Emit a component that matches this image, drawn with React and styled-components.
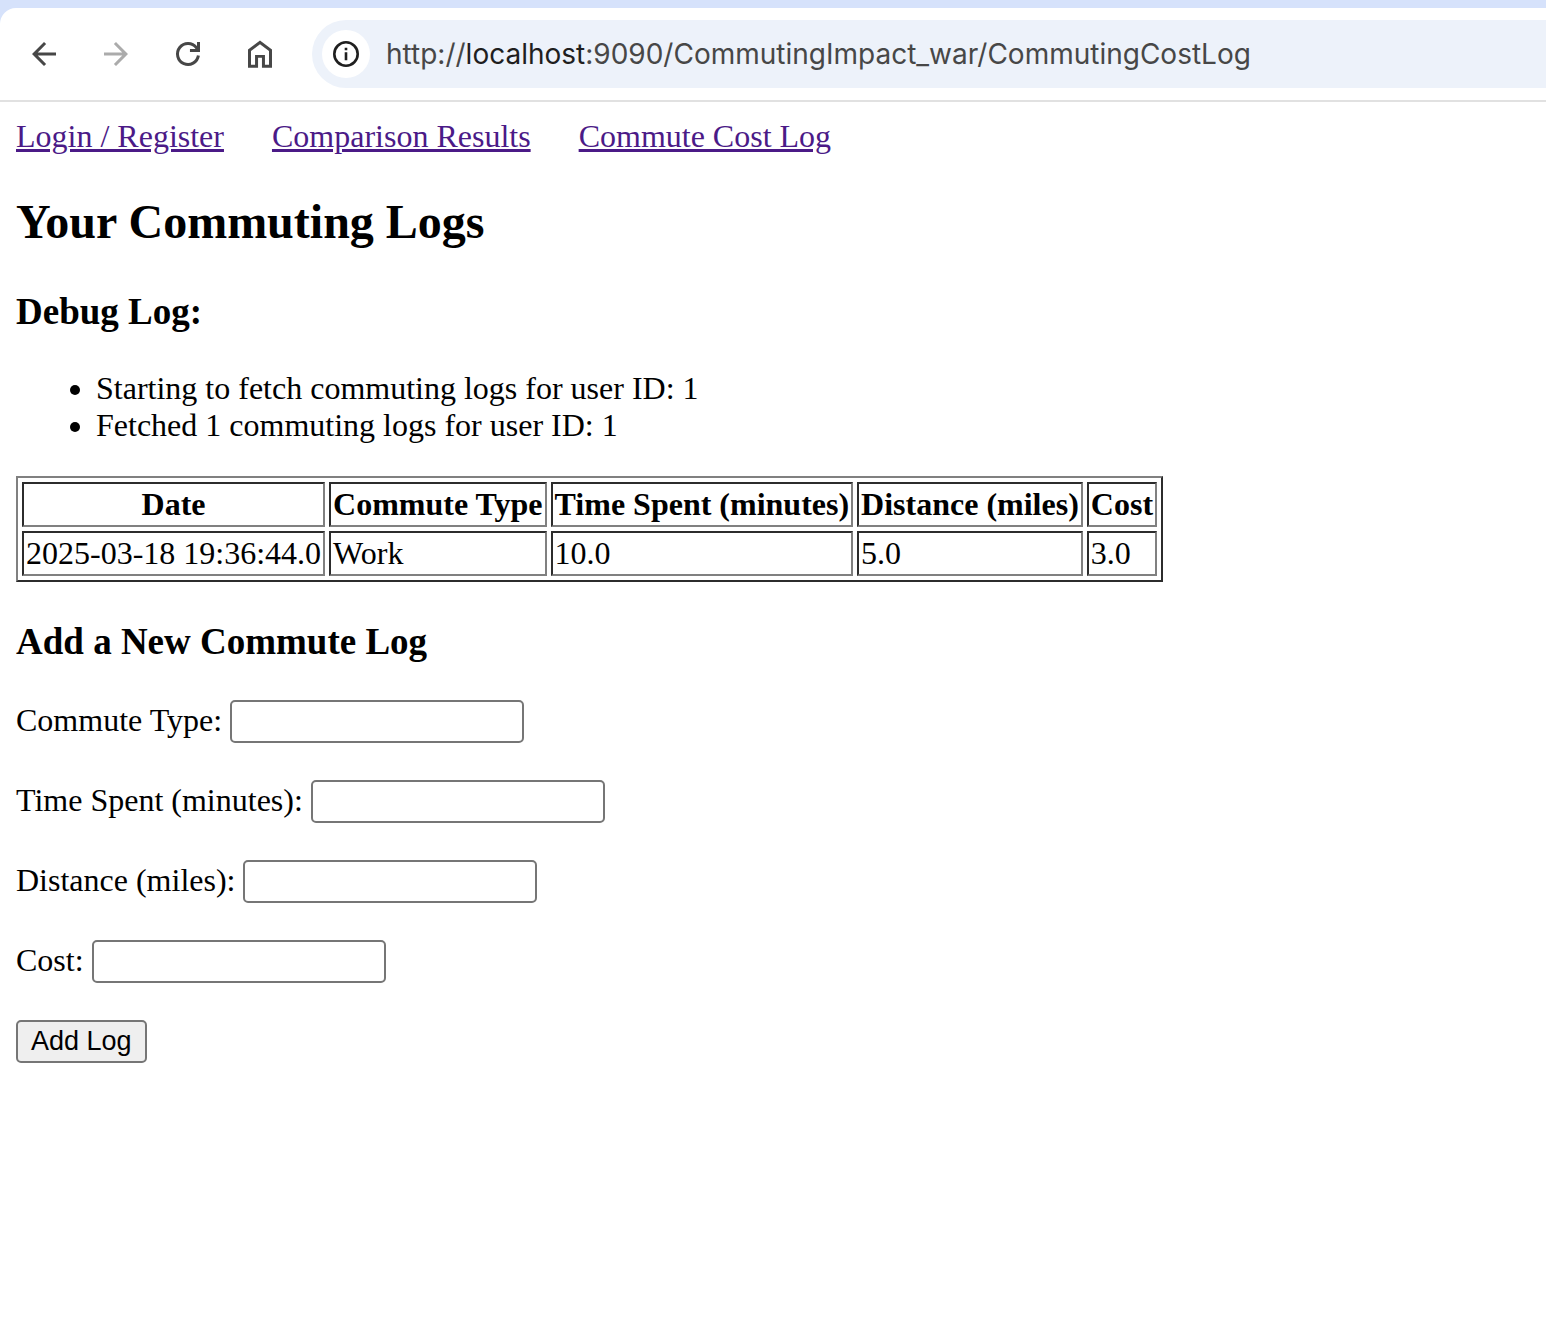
import React from "react";
import styled, { createGlobalStyle } from "styled-components";

const GlobalStyle = createGlobalStyle`
  body {
    margin: 0;
    background: #ffffff;
    color: #000000;
    font-family: "Liberation Serif", "Times New Roman", serif;
    font-size: 32px;
    line-height: 37px;
  }
`;

const TabStrip = styled.header`
  padding-top: 8px;
  background: #d6e2fb;
`;

const Toolbar = styled.div`
  display: flex;
  align-items: center;
  height: 92px;
  padding-left: 8px;
  background: #ffffff;
  border-bottom: 2px solid #e1e1e1;
  border-top-left-radius: 16px;
`;

const ToolButton = styled.button`
  display: flex;
  align-items: center;
  justify-content: center;
  width: 72px;
  height: 72px;
  padding: 0;
  border: 0;
  background: transparent;
  color: #474747;

  &:disabled {
    color: #ababab;
  }
`;

const Glyph = styled.svg`
  display: block;
  width: 36px;
  height: 36px;
  fill: currentColor;
`;

const AddressBar = styled.div`
  display: flex;
  flex: 1;
  align-items: center;
  gap: 16px;
  height: 68px;
  min-width: 0;
  margin-left: 16px;
  padding-left: 10px;
  border-radius: 34px 0 0 34px;
  background: #edf2fa;
`;

const SiteInfo = styled.button`
  display: flex;
  flex: none;
  align-items: center;
  justify-content: center;
  width: 48px;
  height: 48px;
  padding: 0;
  border: 0;
  border-radius: 50%;
  background: #ffffff;
  color: #1f1f1f;
`;

const Address = styled.div`
  flex: 1;
  overflow: hidden;
  color: #474747;
  font-family: Inter, Roboto, "Liberation Sans", sans-serif;
  font-size: 28px;
  line-height: 36px;
  white-space: nowrap;
  outline: 0;
`;

const Host = styled.span`
  color: #1f1f1f;
`;

const Page = styled.main`
  padding: 16px;
`;

const Nav = styled.nav`
  display: flex;
  flex-wrap: wrap;
  gap: 0 48px;
`;

const NavLink = styled.a`
  color: #4b1a87;
  text-decoration: underline;
`;

const Title = styled.h2`
  margin: 40px 0 41px;
  font-size: 48px;
  line-height: 54px;
`;

const Subtitle = styled.h3`
  margin: 38px 0 36px;
  font-size: 37px;
  line-height: 44px;
`;

const DebugList = styled.ul`
  margin: 32px 0;
  padding-left: 80px;
`;

const LogTable = styled.table`
  border: 2px solid;
  border-color: #808080 #2c2c2c #2c2c2c #808080;
  border-collapse: separate;
  border-spacing: 4px;

  th,
  td {
    padding: 2px;
    border: 2px solid;
    border-color: #2c2c2c #808080 #808080 #2c2c2c;
    white-space: nowrap;
  }
`;

const LogForm = styled.form`
  display: flex;
  flex-direction: column;
  align-items: flex-start;
  gap: 37px;
`;

const Field = styled.div`
  display: flex;
  align-items: flex-start;
  gap: 8px;
  line-height: 40px;
`;

const TextInput = styled.input`
  box-sizing: border-box;
  width: 294px;
  height: 43px;
  padding: 2px 4px;
  border: 2px solid #767676;
  border-radius: 5px;
  background: #ffffff;
  font-family: "Liberation Sans", Arial, sans-serif;
  font-size: 27px;
`;

const SubmitButton = styled.button`
  box-sizing: border-box;
  height: 43px;
  padding: 0 13px;
  border: 2px solid #767676;
  border-radius: 5px;
  background: #efefef;
  color: #000000;
  font-family: "Liberation Sans", Arial, sans-serif;
  font-size: 27px;
  line-height: 37px;
`;

const links = ["Login / Register", "Comparison Results", "Commute Cost Log"];

const debugLog = [
  "Starting to fetch commuting logs for user ID: 1",
  "Fetched 1 commuting logs for user ID: 1",
];

const columns = ["Date", "Commute Type", "Time Spent (minutes)", "Distance (miles)", "Cost"];

const logs = [["2025-03-18 19:36:44.0", "Work", "10.0", "5.0", "3.0"]];

const fields = [
  { id: "commuteType", label: "Commute Type:" },
  { id: "timeSpent", label: "Time Spent (minutes):" },
  { id: "distance", label: "Distance (miles):" },
  { id: "cost", label: "Cost:" },
];

function BrowserToolbar() {
  return (
    <TabStrip>
      <Toolbar>
        <ToolButton type="button" aria-label="Back">
          <Glyph viewBox="0 0 24 24">
            <path d="M20 11H7.83l5.59-5.59L12 4l-8 8 8 8 1.41-1.41L7.83 13H20v-2z" />
          </Glyph>
        </ToolButton>
        <ToolButton type="button" aria-label="Forward" disabled>
          <Glyph viewBox="0 0 24 24">
            <path d="M4 11h12.17l-5.59-5.59L12 4l8 8-8 8-1.41-1.41L16.17 13H4v-2z" />
          </Glyph>
        </ToolButton>
        <ToolButton type="button" aria-label="Reload">
          <Glyph viewBox="0 0 24 24">
            <path
              d="M18.93 13A7 7 0 1 1 17.6 7.8L19 9.5M19 4v5.67h-5.7"
              fill="none"
              stroke="currentColor"
              strokeWidth="2"
            />
          </Glyph>
        </ToolButton>
        <ToolButton type="button" aria-label="Home">
          <Glyph viewBox="0 0 24 24">
            <path d="M6 19.2h2.7v-6.5h6.6v6.5H18V10l-6-4.5L6 10v9.2Zm-2 2V9l8-6 8 6v12.2h-6.7v-6.7h-2.6v6.7H4Z" />
          </Glyph>
        </ToolButton>
        <AddressBar>
          <SiteInfo type="button" aria-label="View site information">
            <Glyph viewBox="0 0 36 36">
              <circle cx="18" cy="18" r="11.7" fill="none" stroke="currentColor" strokeWidth="2.6" />
              <path d="M16.7 11.7h2.6v2.6h-2.6zM16.7 16.3h2.6v8h-2.6z" />
            </Glyph>
          </SiteInfo>
          <Address
            role="textbox"
            aria-label="Address"
            contentEditable
            suppressContentEditableWarning
            spellCheck={false}
          >
            http://<Host>localhost</Host>:9090/CommutingImpact_war/CommutingCostLog
          </Address>
        </AddressBar>
      </Toolbar>
    </TabStrip>
  );
}

export default function App() {
  return (
    <>
      <GlobalStyle />
      <BrowserToolbar />
      <Page>
        <Nav>
          {links.map((text) => (
            <NavLink key={text} href="#">
              {text}
            </NavLink>
          ))}
        </Nav>
        <Title>Your Commuting Logs</Title>
        <Subtitle>Debug Log:</Subtitle>
        <DebugList>
          {debugLog.map((line) => (
            <li key={line}>{line}</li>
          ))}
        </DebugList>
        <LogTable>
          <thead>
            <tr>
              {columns.map((name) => (
                <th key={name} scope="col">
                  {name}
                </th>
              ))}
            </tr>
          </thead>
          <tbody>
            {logs.map((row) => (
              <tr key={row[0]}>
                {row.map((cell, i) => (
                  <td key={columns[i]}>{cell}</td>
                ))}
              </tr>
            ))}
          </tbody>
        </LogTable>
        <Subtitle>Add a New Commute Log</Subtitle>
        <LogForm onSubmit={(event) => event.preventDefault()}>
          {fields.map(({ id, label }) => (
            <Field key={id}>
              <label htmlFor={id}>{label}</label>
              <TextInput id={id} name={id} type="text" />
            </Field>
          ))}
          <SubmitButton type="submit">Add Log</SubmitButton>
        </LogForm>
      </Page>
    </>
  );
}
